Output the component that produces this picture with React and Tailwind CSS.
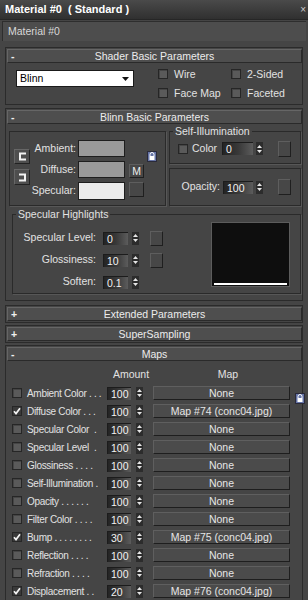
import React from 'react';

const Check = ({ checked }) => (
  <div
    className={`w-[10px] h-[10px] shrink-0 border border-[#262626] flex items-center justify-center ${
      checked ? 'bg-[#3a3a3a]' : 'bg-[#5a5a5a] shadow-[inset_1px_1px_0_#454545]'
    }`}
  >
    {checked && (
      <svg width="8" height="8" viewBox="0 0 8 8">
        <path d="M1 4.2 L3 6.6 L7 1.2" stroke="#f4f4f4" strokeWidth="1.7" fill="none" />
      </svg>
    )}
  </div>
);

const Spin = () => (
  <div className="w-[7px] h-[13px] shrink-0 bg-[#2c2c2c] flex flex-col items-center justify-center gap-[2px]">
    <svg width="5" height="3" viewBox="0 0 5 3">
      <path d="M0 3 L2.5 0 L5 3Z" fill="#e6e6e6" />
    </svg>
    <svg width="5" height="3" viewBox="0 0 5 3">
      <path d="M0 0 L2.5 3 L5 0Z" fill="#e6e6e6" />
    </svg>
  </div>
);

const Field = ({ value, w }) => (
  <div
    className={`${w} h-[13px] shrink-0 border-t border-l border-[#1c1c1c] bg-linear-to-r from-[#242424] via-[#383838] to-[#5c5c5c] text-[#f2f2f2] leading-[12px] pl-[3px] overflow-hidden`}
  >
    {value}
  </div>
);

const SquareBtn = ({ h = 'h-[15px]', children }) => (
  <div
    className={`w-[13px] ${h} shrink-0 bg-[#474747] border border-t-[#5e5e5e] border-l-[#5e5e5e] border-b-[#1f1f1f] border-r-[#1f1f1f] flex items-center justify-center text-[#e8e8e8] leading-none`}
  >
    {children}
  </div>
);

const Group = ({ label, className, children }) => (
  <div className={`relative border border-[#2a2a2a] shadow-[1px_1px_0_#575757] ${className}`}>
    {label && (
      <span className="absolute -top-[7px] left-[3px] px-[2px] bg-[#454545] leading-[12px]">{label}</span>
    )}
    {children}
  </div>
);

const Header = ({ sign, title }) => (
  <div className="h-[14px] ml-[1px] flex items-center bg-[#4e4e4e] border border-t-[#666] border-l-[#666] border-b-[#2a2a2a] border-r-[#2a2a2a] leading-[12px]">
    <span className="w-[12px] pl-[3px] text-[#f0f0f0] font-bold">{sign}</span>
    <span className="flex-1 text-center pr-[12px] text-[#ececec]">{title}</span>
  </div>
);

const Rollout = ({ sign, title, className = '', children }) => (
  <div className={`ml-[5px] mr-[5px] border border-[#2b2b2b] pt-[1px] ${className}`}>
    <Header sign={sign} title={title} />
    {children}
  </div>
);

const LinkIcon = () => (
  <svg width="10" height="11" viewBox="0 0 10 11">
    <rect x="0.5" y="0.5" width="9" height="10" fill="#6574a6" stroke="#2a2a3a" />
    <path d="M3 5 V3.5 A2 2 0 0 1 7 3.5 V5" stroke="#fff" strokeWidth="1" fill="none" />
    <rect x="2.5" y="5" width="5" height="4" fill="#fff" />
  </svg>
);

const maps = [
  ['Ambient Color . . .', false, '100', 'None'],
  ['Diffuse Color . . .', true, '100', 'Map #74 (conc04.jpg)'],
  ['Specular Color  .', false, '100', 'None'],
  ['Specular Level  .', false, '100', 'None'],
  ['Glossiness . . . .', false, '100', 'None'],
  ['Self-Illumination .', false, '100', 'None'],
  ['Opacity . . . . . .', false, '100', 'None'],
  ['Filter Color . . . .', false, '100', 'None'],
  ['Bump . . . . . . . .', true, '30', 'Map #75 (conc04.jpg)'],
  ['Reflection . . . .', false, '100', 'None'],
  ['Refraction . . . .', false, '100', 'None'],
  ['Displacement . .', true, '20', 'Map #76 (conc04.jpg)'],
];

export default function App() {
  return (
    <div className="w-[308px] h-[600px] overflow-hidden bg-[#454545] text-[#e2e2e2] text-[10.5px] font-['Liberation_Sans',Arial,sans-serif]">
      {/* title */}
      <div className="h-[20px] flex items-center justify-between pl-[5px] pr-[2px] bg-linear-to-b from-[#4a4a4a] to-[#303030] border-b border-[#262626]">
        <span className="text-[11px] font-bold text-white whitespace-pre">Material #0  ( Standard )</span>
        <span className="text-[10px] text-[#ccc]">×</span>
      </div>

      {/* name */}
      <div className="h-[22px] px-[2px] pt-[1px]">
        <div className="h-[20px] bg-[#4d4d4d] border-t border-l border-[#2e2e2e] flex items-center pl-[5px] text-[#d8d8d8]">
          Material #0
        </div>
      </div>

      <Rollout sign="-" title="Shader Basic Parameters" className="mt-[5px]">
        <div className="h-[41px] flex">
          <div className="ml-[10px] mt-[7px] w-[118px] h-[17px] bg-white border border-[#1a1a1a] flex items-center pl-[3px] text-black">
            <span>Blinn</span>
            <svg className="ml-auto mr-[4px]" width="7" height="4" viewBox="0 0 7 4">
              <path d="M0 0 L3.5 4 L7 0Z" fill="#111" />
            </svg>
          </div>
          <div className="ml-[24px] mt-[6px] grid grid-cols-[73px_70px] gap-y-[9px] auto-rows-[10px]">
            {['Wire', '2-Sided', 'Face Map', 'Faceted'].map((t) => (
              <div key={t} className="flex items-center gap-[6px] leading-[10px]">
                <Check />
                <span>{t}</span>
              </div>
            ))}
          </div>
        </div>
      </Rollout>

      <Rollout sign="-" title="Blinn Basic Parameters" className="mt-[3px]">
        <div className="flex mt-[7px]">
          <Group className="ml-[3px] w-[157px] h-[75px] flex pt-[8px]">
            <div className="ml-[4px] w-[16px] flex flex-col gap-[5px] pt-[9px]">
              <div className="w-[16px] h-[15px] bg-[#4e4e4e] border border-t-[#666] border-l-[#666] border-b-[#222] border-r-[#222] flex items-center justify-center">
                <svg width="9" height="9" viewBox="0 0 9 9">
                  <path d="M8 1.5 H2 V7.5 H8" stroke="#f2f2f2" strokeWidth="2" fill="none" />
                </svg>
              </div>
              <div className="w-[16px] h-[16px] bg-[#4e4e4e] border border-t-[#666] border-l-[#666] border-b-[#222] border-r-[#222] flex items-center justify-center">
                <svg width="9" height="9" viewBox="0 0 9 9">
                  <path d="M1 1.5 H7 V7.5 H1" stroke="#f2f2f2" strokeWidth="2" fill="none" />
                </svg>
              </div>
            </div>
            <div className="w-[46px] flex flex-col gap-[4px] text-right">
              <div className="h-[17px] leading-[17px]">Ambient:</div>
              <div className="h-[17px] leading-[17px]">Diffuse:</div>
              <div className="h-[17px] leading-[17px]">Specular:</div>
            </div>
            <div className="ml-[2px] w-[47px] flex flex-col gap-[4px]">
              <div className="h-[17px] bg-[#9a9a9a] border border-[#1e1e1e]" />
              <div className="h-[17px] bg-[#9a9a9a] border border-[#1e1e1e]" />
              <div className="h-[18px] bg-[#ebebeb] border border-[#1e1e1e]" />
            </div>
            <div className="ml-[4px] flex flex-col pt-[24px] gap-[4px]">
              <div className="w-[15px] h-[14px] bg-[#474747] border border-t-[#5e5e5e] border-l-[#5e5e5e] border-b-[#1f1f1f] border-r-[#1f1f1f] flex items-center justify-center leading-none text-[#eee]">
                M
              </div>
              <div className="w-[15px] h-[15px] bg-[#474747] border border-t-[#5e5e5e] border-l-[#5e5e5e] border-b-[#1f1f1f] border-r-[#1f1f1f]" />
            </div>
            <div className="ml-[3px] pt-[11px]">
              <LinkIcon />
            </div>
          </Group>

          <div className="ml-[3px] w-[132px] flex flex-col gap-[4px]">
            <Group label="Self-Illumination" className="h-[33px] flex items-start pt-[9px]">
              <div className="ml-[8px] h-[15px] flex items-center">
                <Check />
                <span className="ml-[4px] w-[30px]">Color</span>
                <Field value="0" w="w-[31px]" />
                <div className="ml-[3px]">
                  <Spin />
                </div>
                <div className="ml-[15px]">
                  <SquareBtn h="h-[16px]" />
                </div>
              </div>
            </Group>
            <Group className="h-[38px] flex items-start pt-[10px]">
              <div className="h-[16px] flex items-center">
                <span className="w-[50px] text-right">Opacity:</span>
                <div className="ml-[3px]">
                  <Field value="100" w="w-[30px]" />
                </div>
                <div className="ml-[3px]">
                  <Spin />
                </div>
                <div className="ml-[15px]">
                  <SquareBtn h="h-[16px]" />
                </div>
              </div>
            </Group>
          </div>
        </div>

        <Group label="Specular Highlights" className="mt-[8px] mb-[6px] ml-[6px] mr-[1px] h-[80px] flex">
          <div className="pt-[12px] flex flex-col">
            {[
              ['Specular Level:', '0', true],
              ['Glossiness:', '10', true],
              ['Soften:', '0.1', false],
            ].map(([l, v, b]) => (
              <div key={l} className="h-[22px] flex items-center">
                <span className="w-[83px] text-right">{l}</span>
                <div className="ml-[7px]">
                  <Field value={v} w="w-[25px]" />
                </div>
                <div className="ml-[4px]">
                  <Spin />
                </div>
                <div className="ml-[11px] w-[13px]">{b && <SquareBtn />}</div>
              </div>
            ))}
          </div>
          <div className="ml-auto mr-[10px] mt-[7px] w-[79px] h-[65px] bg-[#0e0e0e] border border-[#5c5c5c] flex flex-col justify-end">
            <div className="h-[2px] mx-[2px] mb-[1px] bg-white" />
          </div>
        </Group>
      </Rollout>

      <Rollout sign="+" title="Extended Parameters" className="mt-[4px] pb-[1px]" />
      <Rollout sign="+" title="SuperSampling" className="mt-[2px] pb-[1px]" />

      <Rollout sign="-" title="Maps" className="mt-[2px] border-b-0">
        <div className="mt-[7px] h-[12px] flex items-center leading-[12px]">
          <span className="ml-[104px] w-[42px] text-center">Amount</span>
          <span className="ml-[2px] w-[140px] text-center pl-[8px]">Map</span>
        </div>
        <div className="mt-[4px] flex flex-col">
          {maps.map(([label, on, amt, map], i) => (
            <div key={label} className="relative h-[18px] flex items-center">
              <div className="ml-[6px]">
                <Check checked={on} />
              </div>
              <span className="ml-[5px] w-[78px] whitespace-pre text-[10px] tracking-[-0.3px]">{label}</span>
              <div className="ml-[2px]">
                <Field value={amt} w="w-[24px]" />
              </div>
              <div className="ml-[5px]">
                <Spin />
              </div>
              <div className="ml-[10px] w-[137px] h-[14px] bg-[#4b4b4b] border border-t-[#5f5f5f] border-l-[#5f5f5f] border-b-[#1e1e1e] border-r-[#1e1e1e] flex items-center justify-center leading-[12px] text-[#e6e6e6]">
                {map}
              </div>
              {i === 0 && (
                <div className="absolute left-[289px] top-[9px]">
                  <LinkIcon />
                </div>
              )}
            </div>
          ))}
        </div>
      </Rollout>
    </div>
  );
}
